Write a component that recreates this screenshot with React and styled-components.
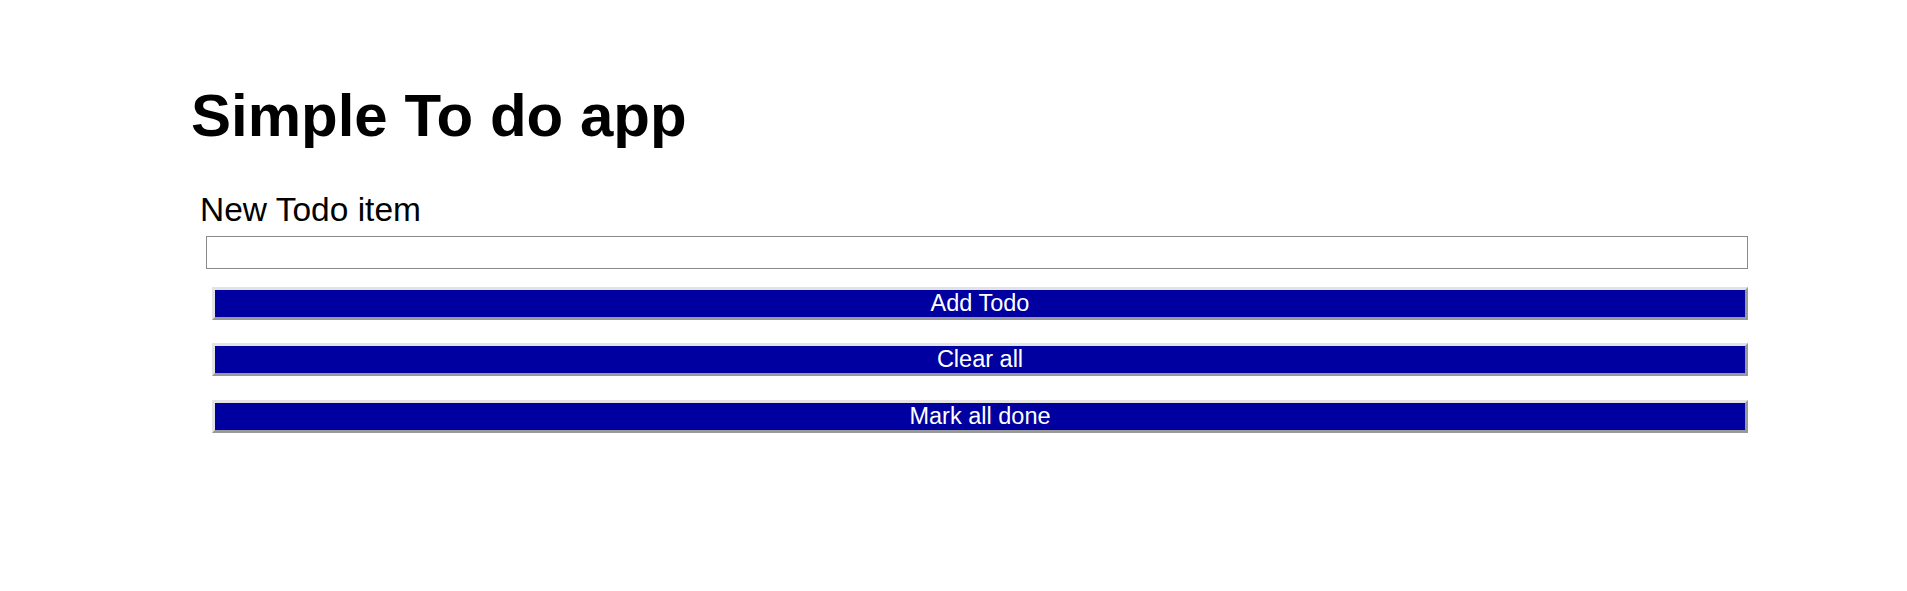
import React, { useState } from 'react'
import styled, { createGlobalStyle } from 'styled-components'

const GlobalStyle = createGlobalStyle`
  html, body {
    margin: 0;
    padding: 0;
    background: #ffffff;
    font-family: "Liberation Sans", Arial, sans-serif;
  }
`

const Page = styled.div`
  padding: 81px 159px 0 191px;
`

const Title = styled.h1`
  margin: 0 0 41px;
  font-size: 60px;
  font-weight: bold;
  line-height: 69px;
  color: #000;
`

const Form = styled.div`
  display: flex;
  flex-direction: column;
  padding-left: 9px;
`

const Label = styled.label`
  font-size: 33.5px;
  line-height: 38px;
  color: #000;
  margin-bottom: 7px;
`

const Input = styled.input`
  box-sizing: border-box;
  margin: 0 0 18px 6px;
  height: 33px;
  border: 1px solid #8a8a8a;
  padding: 0 4px;
  font-size: 20px;
  font-family: inherit;
  outline: none;
`

const Button = styled.button`
  box-sizing: border-box;
  margin: 0 0 ${p => p.$gap}px 12px;
  height: 33px;
  padding: 0;
  border: 3px solid;
  border-color: #e3e3e3 #999999 #999999 #e3e3e3;
  background: #0000a0;
  color: #ffffff;
  font-family: inherit;
  font-size: 23.5px;
  line-height: 27px;
  cursor: pointer;
`

export default function App() {
  const [text, setText] = useState('')
  const [todos, setTodos] = useState([])

  return (
    <Page>
      <GlobalStyle />
      <Title>Simple To do app</Title>
      <Form>
        <Label htmlFor="todo">New Todo item</Label>
        <Input id="todo" value={text} onChange={e => setText(e.target.value)} />
        <Button $gap={23} onClick={() => { if (text) { setTodos([...todos, { text, done: false }]); setText('') } }}>Add Todo</Button>
        <Button $gap={24} onClick={() => setTodos([])}>Clear all</Button>
        <Button $gap={0} onClick={() => setTodos(todos.map(t => ({ ...t, done: true })))}>Mark all done</Button>
      </Form>
    </Page>
  )
}
